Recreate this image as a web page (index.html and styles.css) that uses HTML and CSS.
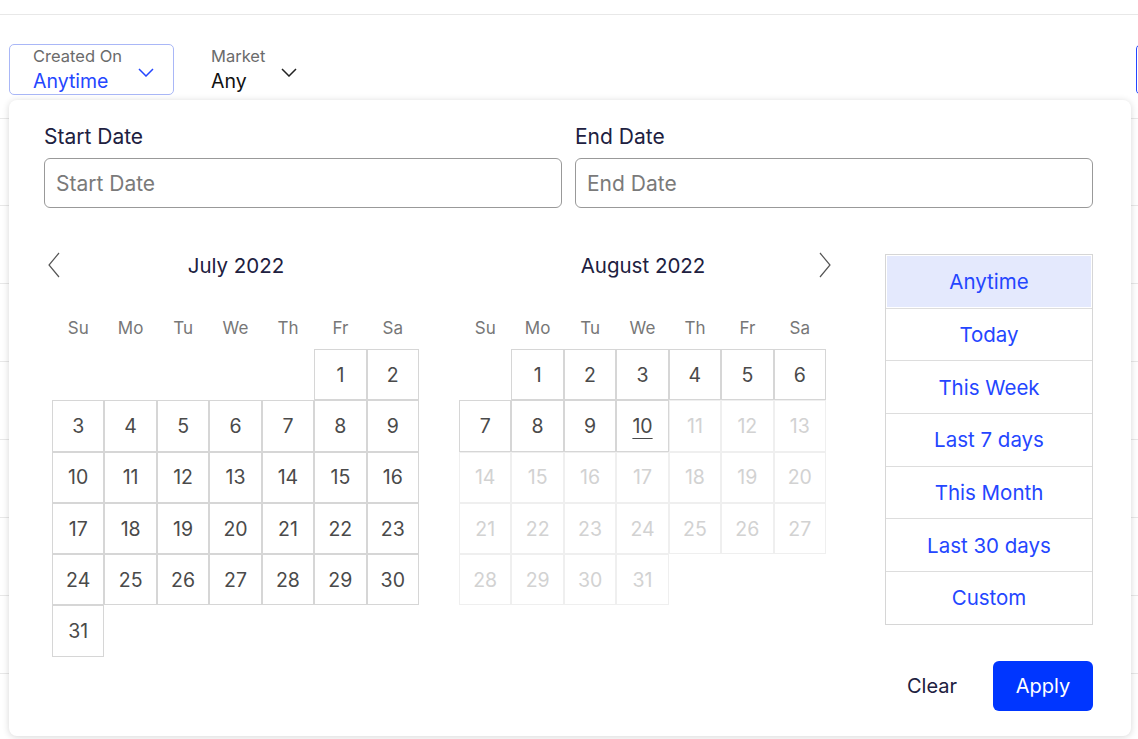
FILE: index.html
```html
<!DOCTYPE html>
<html lang="en">
<head>
    <meta charset="UTF-8">
    <title>Date filter</title>
    <link rel="stylesheet" href="styles.css">
</head>
<body>
    <div class="topbar"></div>
    <div class="toolbar">
        <button type="button" class="filter filter-active">
            <span class="filter-text">
                <span class="filter-label">Created On</span>
                <span class="filter-value">Anytime</span>
            </span>
            <svg class="chevron" width="16" height="9" viewBox="0 0 16 9"><path d="M1 1 L8 8 L15 1" fill="none" stroke="currentColor" stroke-width="1.5"/></svg>
        </button>
        <button type="button" class="filter">
            <span class="filter-text">
                <span class="filter-label">Market</span>
                <span class="filter-value">Any</span>
            </span>
            <svg class="chevron" width="16" height="9" viewBox="0 0 16 9"><path d="M1 1 L8 8 L15 1" fill="none" stroke="currentColor" stroke-width="1.5"/></svg>
        </button>
        <button type="button" class="outline-button"></button>
    </div>

    <div class="table">
        <div class="table-head"></div>
        <div class="table-row"></div>
        <div class="table-row"></div>
        <div class="table-row"></div>
        <div class="table-row"></div>
        <div class="table-row"></div>
        <div class="table-row"></div>
        <div class="table-row"></div>
    </div>

    <div class="picker">
        <div class="date-fields">
            <div class="field">
                <label for="start">Start Date</label>
                <input type="text" id="start" placeholder="Start Date">
            </div>
            <div class="field">
                <label for="end">End Date</label>
                <input type="text" id="end" placeholder="End Date">
            </div>
        </div>

        <div class="picker-body">
            <div class="calendars">
                <div class="month">
                    <div class="month-head">
                        <svg class="nav" width="12" height="26" viewBox="0 0 12 26"><path d="M11 1 L1 13 L11 25" fill="none" stroke="#555" stroke-width="1.2"/></svg>
                        <span class="month-title">July 2022</span>
                        <span class="nav"></span>
                    </div>
                    <div class="weekdays">
                        <span>Su</span><span>Mo</span><span>Tu</span><span>We</span><span>Th</span><span>Fr</span><span>Sa</span>
                    </div>
                    <div class="days">
                        <span class="empty"></span><span class="empty"></span><span class="empty"></span><span class="empty"></span><span class="empty"></span>
                        <span>1</span><span>2</span>
                        <span>3</span><span>4</span><span>5</span><span>6</span><span>7</span><span>8</span><span>9</span>
                        <span>10</span><span>11</span><span>12</span><span>13</span><span>14</span><span>15</span><span>16</span>
                        <span>17</span><span>18</span><span>19</span><span>20</span><span>21</span><span>22</span><span>23</span>
                        <span>24</span><span>25</span><span>26</span><span>27</span><span>28</span><span>29</span><span>30</span>
                        <span>31</span>
                    </div>
                </div>

                <div class="month">
                    <div class="month-head">
                        <span class="nav"></span>
                        <span class="month-title">August 2022</span>
                        <svg class="nav" width="12" height="26" viewBox="0 0 12 26"><path d="M1 1 L11 13 L1 25" fill="none" stroke="#555" stroke-width="1.2"/></svg>
                    </div>
                    <div class="weekdays">
                        <span>Su</span><span>Mo</span><span>Tu</span><span>We</span><span>Th</span><span>Fr</span><span>Sa</span>
                    </div>
                    <div class="days">
                        <span class="empty"></span>
                        <span>1</span><span>2</span><span>3</span><span>4</span><span>5</span><span>6</span>
                        <span>7</span><span>8</span><span>9</span><span class="today">10</span><span class="off">11</span><span class="off">12</span><span class="off">13</span>
                        <span class="off">14</span><span class="off">15</span><span class="off">16</span><span class="off">17</span><span class="off">18</span><span class="off">19</span><span class="off">20</span>
                        <span class="off">21</span><span class="off">22</span><span class="off">23</span><span class="off">24</span><span class="off">25</span><span class="off">26</span><span class="off">27</span>
                        <span class="off">28</span><span class="off">29</span><span class="off">30</span><span class="off">31</span>
                    </div>
                </div>
            </div>

            <ul class="presets">
                <li class="selected">Anytime</li>
                <li>Today</li>
                <li>This Week</li>
                <li>Last 7 days</li>
                <li>This Month</li>
                <li>Last 30 days</li>
                <li>Custom</li>
            </ul>
        </div>

        <div class="picker-footer">
            <button type="button" class="clear-button">Clear</button>
            <button type="button" class="apply-button">Apply</button>
        </div>
    </div>
</body>
</html>
```

FILE: styles.css
```css
* {
    box-sizing: border-box;
}
body {
    margin: 0;
    font-family: Inter, "Noto Sans", sans-serif;
    background-color: #fff;
    color: #222;
    overflow: hidden;
}
button {
    font-family: inherit;
}

/* page behind the dropdown */
.topbar {
    height: 15px;
    border-bottom: 1px solid #e8e8e8;
}
.toolbar {
    display: flex;
    align-items: center;
    gap: 13px;
    padding: 29px 0 0 9px;
    margin-right: -120px;
}
.filter {
    display: flex;
    align-items: center;
    gap: 16px;
    height: 51px;
    padding: 0 19px 0 23px;
    background: none;
    border: 1px solid transparent;
    border-radius: 5px;
    text-align: left;
    color: #222;
}
.filter-active {
    border-color: #a9b7f7;
    color: #2446ff;
}
.filter-text {
    display: flex;
    flex-direction: column;
}
.filter-label {
    font-size: 16.5px;
    line-height: 20px;
    color: #6b6b6b;
}
.filter-value {
    font-size: 19.5px;
    line-height: 25px;
    margin-top: 3px;
    color: #111;
}
.filter-active .filter-value {
    color: #2446ff;
}
.chevron {
    margin-top: 6px;
}
.outline-button {
    margin-left: auto;
    width: 122px;
    height: 51px;
    background: #fff;
    border: 1px solid #2446ff;
    border-radius: 5px;
}
.table {
    margin-top: 23px;
}
.table-head {
    height: 87px;
    border-top: 1px solid #e8e8e8;
}
.table-row {
    height: 78px;
    border-top: 1px solid #e8e8e8;
}

/* dropdown */
.picker {
    position: absolute;
    top: 100px;
    left: 9px;
    width: 1122px;
    padding: 25px 38px 25px 35px;
    background-color: #fff;
    border-radius: 8px;
    box-shadow: 0 1px 7px rgba(0, 0, 0, 0.16);
}
.date-fields {
    display: grid;
    grid-template-columns: 1fr 1fr;
    gap: 13px;
}
.field label {
    display: block;
    font-size: 21px;
    line-height: 24px;
    color: #202040;
    margin-bottom: 9px;
}
.field input {
    width: 100%;
    height: 50px;
    padding: 0 11px;
    font-family: inherit;
    font-size: 21px;
    border: 1px solid #999;
    border-radius: 6px;
    color: #222;
}
.field input::placeholder {
    color: #7a7a7a;
}

.picker-body {
    display: flex;
    align-items: flex-start;
    margin-top: 46px;
}
.calendars {
    display: flex;
    gap: 40px;
    padding-left: 8px;
}
.month {
    width: 367px;
}
.month-head {
    display: flex;
    align-items: center;
    justify-content: space-between;
    height: 22px;
    margin: 0 -5px 0 -4px;
}
.nav {
    width: 12px;
}
.month-title {
    font-size: 20.5px;
    color: #202040;
}
.weekdays {
    display: grid;
    grid-template-columns: repeat(7, 1fr);
    margin-top: 41px;
    height: 22px;
    line-height: 22px;
    text-align: center;
    font-size: 17px;
    color: #777;
}
.days {
    display: grid;
    grid-template-columns: repeat(7, 1fr);
    grid-auto-rows: 51.3px;
    margin-top: 10px;
}
.days span {
    display: flex;
    align-items: center;
    justify-content: center;
    border: 1px solid #d6d6d6;
    font-size: 19.5px;
    color: #4a4a4a;
}
.days .empty {
    border: none;
}
.days .off {
    border-color: #efefef;
    color: #d2d2d2;
}
.days .today {
    text-decoration: underline;
    text-underline-offset: 5px;
}

.presets {
    list-style: none;
    margin: 0 0 0 auto;
    padding: 0;
    width: 208px;
    border: 1px solid #d6d6d6;
}
.presets li {
    height: 52.7px;
    display: flex;
    align-items: center;
    justify-content: center;
    font-size: 20.5px;
    color: #2446ff;
    border-top: 1px solid #ddd;
    cursor: pointer;
}
.presets li:first-child {
    border-top: none;
}
.presets .selected {
    background-color: #e4e9fd;
    height: 50.7px;
    margin: 1px;
}

.picker-footer {
    display: flex;
    justify-content: flex-end;
    gap: 20px;
    margin-top: 4px;
}
.clear-button {
    height: 50px;
    padding: 0 16px;
    background: none;
    border: none;
    font-size: 20px;
    color: #202040;
    cursor: pointer;
}
.apply-button {
    width: 100px;
    height: 50px;
    background-color: #0036ff;
    color: #fff;
    border: none;
    border-radius: 6px;
    font-size: 20px;
    cursor: pointer;
}
```
